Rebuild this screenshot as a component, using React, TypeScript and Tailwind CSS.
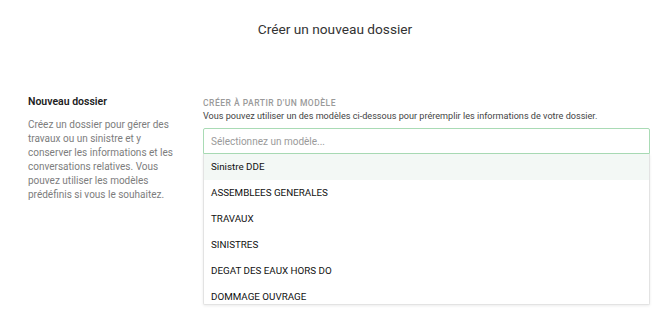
const templates = [
  "Sinistre DDE",
  "ASSEMBLEES GENERALES",
  "TRAVAUX",
  "SINISTRES",
  "DEGAT DES EAUX HORS DO",
  "DOMMAGE OUVRAGE",
]

export default function App() {
  return (
    <div className="h-[319px] w-[670px] overflow-hidden bg-white font-['Roboto',sans-serif]">
      <h1 className="pt-[19px] text-center text-[13.7px] leading-[20px] text-[#333]">Créer un nouveau dossier</h1>

      <div className="mt-[56px] flex pl-[28px] pr-[20px]">
        <div className="w-[146px] shrink-0">
          <h2 className="text-[10.5px] font-semibold leading-[14px] text-[#222]">Nouveau dossier</h2>
          <p className="mt-[9px] text-[10px] leading-[14px] text-[#7d7d7d]">
            Créez un dossier pour gérer des travaux ou un sinistre et y conserver les informations et les conversations relatives. Vous pouvez utiliser les modèles prédéfinis si vous le souhaitez.
          </p>
        </div>

        <div className="ml-[29px] flex-1 pt-[2px]">
          <div className="text-[8.5px] font-medium uppercase leading-[12px] tracking-[0.5px] text-[#9a9a9a]">
            Créer à partir d'un modèle
          </div>
          <p className="mt-[1px] text-[9.1px] leading-[12px] text-[#444]">
            Vous pouvez utiliser un des modèles ci-dessous pour préremplir les informations de votre dossier.
          </p>
          <div className="mt-[6px]">
            <div className="flex h-[26px] items-center rounded-t-[2px] border border-[#a9dbb5] px-[7px] text-[10px] text-[#9a9a9a]">
              Sélectionnez un modèle...
            </div>
            <ul className="max-h-[151px] overflow-hidden rounded-b-[2px] border border-t-0 border-[#e3e3e3] bg-white shadow-[0_1px_3px_rgba(0,0,0,0.08)]">
              {templates.map((t, i) => (
                <li
                  key={t}
                  className={`flex h-[26px] shrink-0 items-center px-[7px] text-[9.8px] text-[#111] ${i === 0 ? "bg-[#f3f8f5]" : ""}`}
                >
                  {t}
                </li>
              ))}
            </ul>
          </div>
        </div>
      </div>
    </div>
  )
}
